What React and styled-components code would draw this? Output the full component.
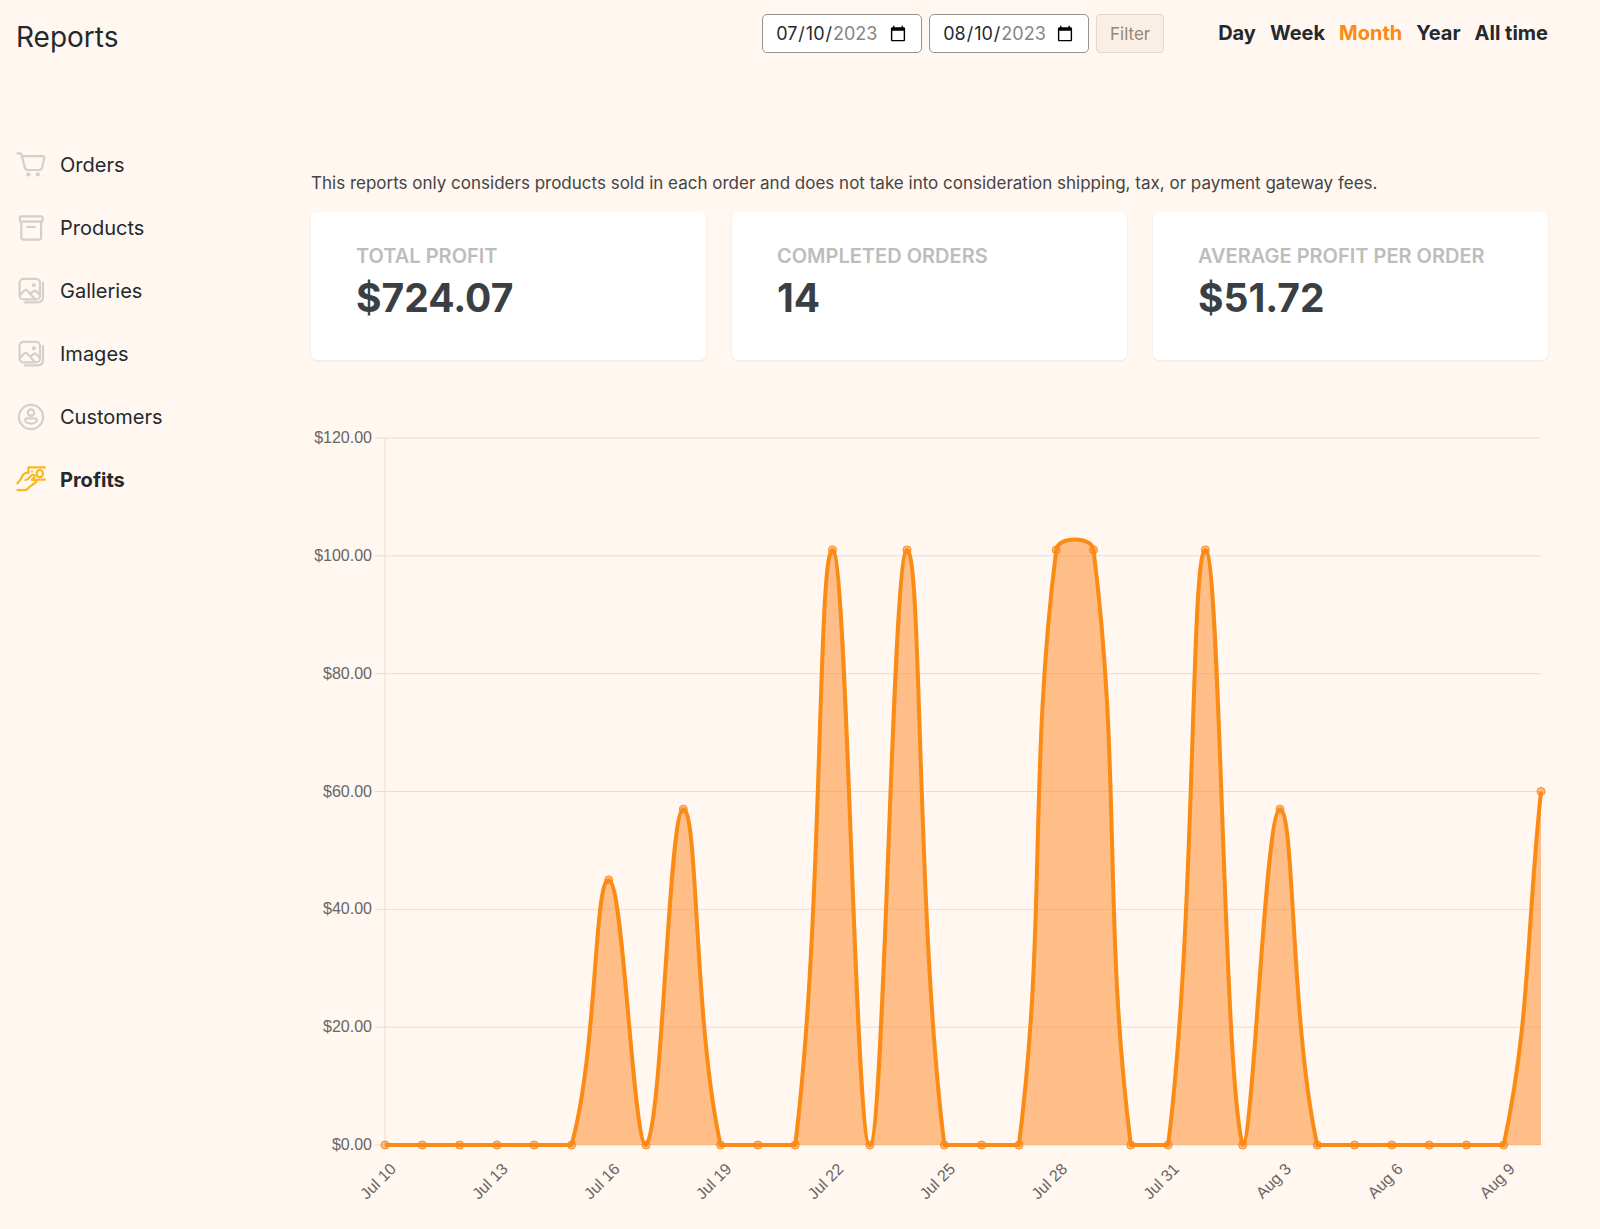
import React, { useState } from 'react';
import styled, { createGlobalStyle } from 'styled-components';

const PERIODS = ['Day', 'Week', 'Month', 'Year', 'All time'];

const STATS = [
    { label: 'Total profit', value: '$724.07' },
    { label: 'Completed orders', value: '14' },
    { label: 'Average profit per order', value: '$51.72' },
];

// one value per day, Jul 10 - Aug 10
const PROFITS = [
    0, 0, 0, 0, 0, 0, 45, 0, 57, 0, 0, 0, 101, 0, 101, 0,
    0, 0, 101, 101, 0, 0, 101, 0, 57, 0, 0, 0, 0, 0, 0, 60,
];

const dayLabel = (i) => (i < 22 ? `Jul ${10 + i}` : `Aug ${i - 21}`);

const CartIcon = () => (
    <IconSvg viewBox="0 0 30 30" aria-hidden="true">
        <path d="M1.6 3.4h2.5q1 0 1.3 1l3.4 13q.7 2.6 3 2.6h11.4q2.4 0 2.9-2.4l2.2-9.7q.3-1.7-1.4-1.7H6" />
        <circle className="solid" cx="12.4" cy="24.4" r="2.1" />
        <circle className="solid" cx="21.8" cy="24.4" r="2.1" />
    </IconSvg>
);

const BoxIcon = () => (
    <IconSvg viewBox="0 0 30 30" aria-hidden="true">
        <rect x="3.8" y="3.4" width="22.8" height="5.2" rx="1.4" />
        <path d="M5.3 8.6v16q0 2 2 2h15.8q2 0 2-2v-16M11.6 14h7.2" />
    </IconSvg>
);

const ImagesIcon = () => (
    <IconSvg viewBox="0 0 30 30" aria-hidden="true">
        <rect x="3.6" y="2.8" width="20.4" height="20.6" rx="4" />
        <path d="M27 6.8v14q0 5.6-5.8 5.6H9" />
        <path d="M3.8 19.2l4.6-4.7q1.4-1.2 2.8 0l7.6 8.5M14.2 17.9l3.2-2.7q1.4-1.1 2.8 0l3.6 3.4" />
        <circle className="solid" cx="17.8" cy="9.2" r="2" />
    </IconSvg>
);

const CustomerIcon = () => (
    <IconSvg viewBox="0 0 30 30" aria-hidden="true">
        <circle cx="15" cy="15" r="12.1" />
        <circle cx="15" cy="10.6" r="3.2" />
        <path d="M11.2 16.4h7.6q2 0 2 1.9c0 1.9-2.6 3.3-5.8 3.3s-5.8-1.4-5.8-3.3q0-1.9 2-1.9z" />
    </IconSvg>
);

const ProfitIcon = () => (
    <IconSvg viewBox="0 0 30 30" aria-hidden="true">
        <path d="M28.9 2.4H12.4v5.4M21.6 14.6h7.3" />
        <ellipse cx="23.8" cy="8.6" rx="3.2" ry="3.6" />
        <path d="M1.4 18.4l4-5.2q1.4-5.4 7-5.8M9.4 15c4.4-.4 4-4.4 7.2-5.2 1.8-.3 2.8 1 1.8 2.2l-2.6 2.8h4q1.8.9-.2 2.6l-6.4 4.8q-1.8 2.9-4.6 2.9H1.4" />
        <circle className="solid" cx="16" cy="6.6" r="1.1" />
    </IconSvg>
);

const SECTIONS = [
    { name: 'Orders', Icon: CartIcon },
    { name: 'Products', Icon: BoxIcon },
    { name: 'Galleries', Icon: ImagesIcon },
    { name: 'Images', Icon: ImagesIcon },
    { name: 'Customers', Icon: CustomerIcon },
    { name: 'Profits', Icon: ProfitIcon },
];

const PLOT = { left: 74, right: 1230, top: 8, bottom: 715, max: 120 };
const TENSION = 0.4;

const clampY = (y) => Math.min(PLOT.bottom, Math.max(PLOT.top, y));
const yFor = (value) => PLOT.bottom - (value / PLOT.max) * (PLOT.bottom - PLOT.top);

const points = PROFITS.map((value, i) => ({
    x: PLOT.left + (i * (PLOT.right - PLOT.left)) / (PROFITS.length - 1),
    y: yFor(value),
}));

// smoothed line, with the control points kept inside the plot
const controls = points.map((p, i) => {
    const prev = points[i - 1] || p;
    const next = points[i + 1] || p;
    const before = Math.hypot(p.x - prev.x, p.y - prev.y);
    const after = Math.hypot(next.x - p.x, next.y - p.y);
    const a = (TENSION * before) / (before + after);
    const b = (TENSION * after) / (before + after);
    return {
        inX: p.x - a * (next.x - prev.x),
        inY: clampY(p.y - a * (next.y - prev.y)),
        outX: p.x + b * (next.x - prev.x),
        outY: clampY(p.y + b * (next.y - prev.y)),
    };
});

const linePath = points.map((p, i) => {
    if (i === 0) return `M${p.x} ${p.y}`;
    const from = controls[i - 1];
    const to = controls[i];
    return `C${from.outX} ${from.outY} ${to.inX} ${to.inY} ${p.x} ${p.y}`;
}).join('');

const areaPath = `${linePath}L${PLOT.right} ${PLOT.bottom}L${PLOT.left} ${PLOT.bottom}Z`;

const ProfitChart = () => (
    <ChartSvg viewBox="0 0 1237 780" role="img" aria-label="Profit per day">
        {[0, 20, 40, 60, 80, 100, 120].map((value) => (
            <g key={value}>
                <line className="grid" x1={PLOT.left - 10} x2={PLOT.right} y1={yFor(value)} y2={yFor(value)} />
                <text x={PLOT.left - 13} y={yFor(value) + 5} textAnchor="end">${value}.00</text>
            </g>
        ))}
        <line className="grid" x1={PLOT.left} x2={PLOT.left} y1={PLOT.top} y2={PLOT.bottom} />
        <path className="area" d={areaPath} />
        <path className="line" d={linePath} />
        {points.map((p, i) => (
            <circle key={i} className="point" cx={p.x} cy={p.y} r="4" />
        ))}
        {points.map((p, i) => i % 3 === 0 && (
            <text key={i} transform={`translate(${p.x + 12} ${PLOT.bottom + 25}) rotate(-45)`} textAnchor="end">
                {dayLabel(i)}
            </text>
        ))}
    </ChartSvg>
);

const App = () => {
    const [period, setPeriod] = useState('Month');

    return (
        <Page>
            <GlobalStyle />
            <Header>
                <Title>Reports</Title>
                <FilterForm onSubmit={(e) => e.preventDefault()}>
                    <DateInput type="date" aria-label="From" defaultValue="2023-07-10" />
                    <DateInput type="date" aria-label="To" defaultValue="2023-08-10" />
                    <FilterButton type="submit">Filter</FilterButton>
                </FilterForm>
                <Periods aria-label="Period">
                    {PERIODS.map((name) => (
                        <PeriodLink
                            key={name}
                            href="#"
                            $active={name === period}
                            onClick={(e) => { e.preventDefault(); setPeriod(name); }}
                        >
                            {name}
                        </PeriodLink>
                    ))}
                </Periods>
            </Header>
            <Body>
                <Sidebar aria-label="Reports">
                    {SECTIONS.map(({ name, Icon }) => (
                        <SidebarLink key={name} href="#" $active={name === 'Profits'}>
                            <Icon />
                            {name}
                        </SidebarLink>
                    ))}
                </Sidebar>
                <Content>
                    <Note>
                        This reports only considers products sold in each order and does not take into
                        consideration shipping, tax, or payment gateway fees.
                    </Note>
                    <Cards>
                        {STATS.map(({ label, value }) => (
                            <Card key={label}>
                                <CardLabel>{label}</CardLabel>
                                <CardValue>{value}</CardValue>
                            </Card>
                        ))}
                    </Cards>
                    <ProfitChart />
                </Content>
            </Body>
        </Page>
    );
};

export default App;

const GlobalStyle = createGlobalStyle`
    * {
        box-sizing: border-box;
    }

    body {
        margin: 0;
        background-color: #fff7f0;
        color: #24292e;
        font-family: Inter, 'Liberation Sans', sans-serif;
    }
`;

const Page = styled.div`
    padding: 14px 52px 16px 16px;
`;

const Header = styled.header`
    display: flex;
    align-items: flex-start;
`;

const Title = styled.h1`
    flex: 1;
    margin: 0;
    font-size: 28px;
    font-weight: 400;
    line-height: 46px;
`;

const FilterForm = styled.form`
    display: flex;
    gap: 7px;
    margin-right: 54px;
`;

const DateInput = styled.input`
    width: 160px;
    height: 39px;
    padding: 0 12px;
    border: 1px solid #949494;
    border-radius: 5px;
    background-color: #fff;
    color: #24292e;
    font-family: inherit;
    font-size: 18px;

    &::-webkit-datetime-edit-year-field {
        color: #858585;
    }
`;

const FilterButton = styled.button`
    width: 68px;
    height: 39px;
    padding: 0;
    border: 1px solid #e3d6ca;
    border-radius: 4px;
    background-color: #faefe5;
    color: #958778;
    font-family: inherit;
    font-size: 17px;
`;

const Periods = styled.nav`
    display: flex;
    gap: 14px;
`;

const PeriodLink = styled.a`
    color: ${({ $active }) => ($active ? '#fa8b14' : '#24292e')};
    font-size: 20px;
    font-weight: 700;
    line-height: 38px;
    text-decoration: none;
`;

const Body = styled.div`
    display: flex;
    padding-top: 73px;
`;

const Sidebar = styled.nav`
    flex: 0 0 295px;
    display: flex;
    flex-direction: column;
`;

const SidebarLink = styled.a`
    display: flex;
    align-items: center;
    gap: 14px;
    height: 63px;
    color: #24292e;
    font-size: 20px;
    font-weight: ${({ $active }) => ($active ? 700 : 400)};
    text-decoration: none;

    svg {
        color: ${({ $active }) => ($active ? '#f9b91c' : '#d3d0cb')};
    }
`;

const IconSvg = styled.svg`
    width: 30px;
    height: 30px;
    fill: none;
    stroke: currentColor;
    stroke-width: 2.2;
    stroke-linecap: round;
    stroke-linejoin: round;

    .solid {
        fill: currentColor;
        stroke: none;
    }
`;

const Content = styled.main`
    flex: 1;
    min-width: 0;
    padding-top: 38px;
`;

const Note = styled.p`
    margin: 0;
    color: #444;
    font-size: 17px;
    line-height: 24px;
`;

const Cards = styled.div`
    display: grid;
    grid-template-columns: repeat(3, 1fr);
    gap: 26px;
    margin-top: 17px;
`;

const Card = styled.section`
    padding: 32px 45px 38px;
    border-radius: 6px;
    background-color: #fff;
    box-shadow: 0 1px 3px rgba(0, 0, 0, 0.08);
`;

const CardLabel = styled.h2`
    margin: 0;
    color: #bdbdbd;
    font-size: 20px;
    font-weight: 600;
    line-height: 24px;
    text-transform: uppercase;
`;

const CardValue = styled.p`
    margin: 6px 0 0;
    color: #3a3f44;
    font-size: 39px;
    font-weight: 700;
    line-height: 48px;
`;

const ChartSvg = styled.svg`
    display: block;
    width: 100%;
    height: auto;
    margin-top: 70px;

    text {
        fill: #666;
        font-family: 'Liberation Sans', sans-serif;
        font-size: 16px;
    }
    .grid {
        stroke: #e6dfd9;
    }
    .area {
        fill: rgba(255, 132, 32, 0.5);
    }
    .line {
        fill: none;
        stroke: #fa8b14;
        stroke-width: 4;
        stroke-linejoin: round;
    }
    .point {
        fill: rgba(255, 132, 32, 0.5);
        stroke: #fa8b14;
    }
`;
